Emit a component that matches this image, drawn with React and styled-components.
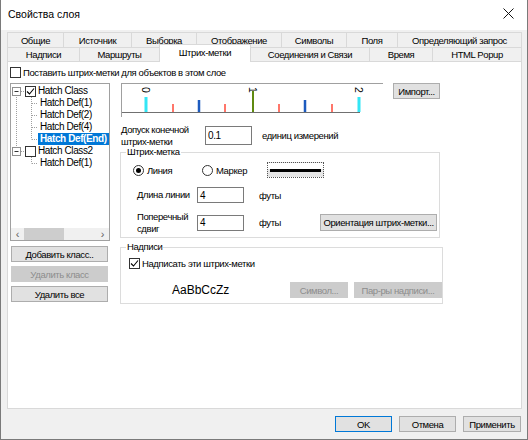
import styled, { createGlobalStyle } from "styled-components";

const GlobalStyle = createGlobalStyle`
  html, body {
    margin: 0;
    padding: 0;
    background: #ffffff;
  }
  body {
    font-family: "Liberation Sans", Arial, sans-serif;
    font-size: 9.5px;
    letter-spacing: -0.4px;
    color: #000000;
  }
`;

const Window = styled.div`
  width: 528px;
  height: 440px;
  box-sizing: border-box;
  border: 1px solid #7a7a7a;
  border-top: none;
  background: #f0f0f0;
  display: flex;
  flex-direction: column;
`;

const TitleBar = styled.div`
  height: 30px;
  background: #ffffff;
  display: flex;
  align-items: center;
  justify-content: space-between;
  padding: 0 13px 3px 7px;
  box-sizing: border-box;
  font-size: 10.5px;
  letter-spacing: 0;
`;

const Body = styled.div`
  flex: 1;
  display: flex;
  flex-direction: column;
  padding: 2px 0 0 6px;
`;

const Tabs = styled.div`
  width: 515px;
  display: flex;
  flex-direction: column;
`;

const TabRow = styled.div`
  display: flex;
  height: ${(p) => p.$h}px;
  align-items: flex-end;
  margin-top: ${(p) => (p.$front ? -1 : 0)}px;
`;

const Tab = styled.div`
  box-sizing: border-box;
  width: ${(p) => p.$w}px;
  height: ${(p) => (p.$active ? p.$h + 3 : p.$h)}px;
  margin-left: -1px;
  border: 1px solid #d9d9d9;
  border-bottom: ${(p) => (p.$active ? "none" : "1px solid #d9d9d9")};
  background: ${(p) => (p.$active ? "#ffffff" : "#f0f0f0")};
  display: flex;
  align-items: center;
  justify-content: center;
  padding-bottom: ${(p) => (p.$active ? 3 : 0)}px;
  white-space: nowrap;
  position: relative;
  z-index: ${(p) => (p.$active ? 2 : 1)};
  &:first-child {
    margin-left: 0;
  }
`;

const Panel = styled.div`
  box-sizing: border-box;
  width: 515px;
  height: 348px;
  margin-top: -1px;
  background: #ffffff;
  border: 1px solid #d9d9d9;
  padding: 5px 0 0 2px;
  display: flex;
  flex-direction: column;
`;

const CheckLine = styled.label`
  display: flex;
  align-items: center;
  gap: 2px;
  height: 11px;
  white-space: nowrap;
`;

const Box = styled.span`
  box-sizing: border-box;
  width: 11px;
  height: 11px;
  border: 1px solid #333333;
  background: #ffffff;
  display: inline-flex;
  align-items: center;
  justify-content: center;
  flex: none;
`;

const Columns = styled.div`
  display: flex;
  gap: 10px;
  margin-top: 5px;
`;

const LeftCol = styled.div`
  width: 100px;
  display: flex;
  flex-direction: column;
`;

const Tree = styled.div`
  box-sizing: border-box;
  height: 158px;
  border: 1px solid #a0a0a0;
  background: #ffffff;
  display: flex;
  flex-direction: column;
`;

const TreeItems = styled.div`
  flex: 1;
  padding-top: 1px;
`;

const TreeRow = styled.div`
  display: flex;
  align-items: center;
  height: 12px;
`;

const TreeLabel = styled.span`
  padding: 0 2px;
  height: 12px;
  line-height: 12px;
  white-space: nowrap;
  margin-left: ${(p) => p.$ml || 0}px;
  background: ${(p) => (p.$selected ? "#0078d7" : "transparent")};
  color: ${(p) => (p.$selected ? "#ffffff" : "#000000")};
  font-weight: ${(p) => (p.$selected ? "bold" : "normal")};
  font-size: 10px;
`;

const ScrollBar = styled.div`
  height: 12px;
  background: #f0f0f0;
  display: flex;
  align-items: center;
  font-size: 11px;
  color: #606060;
`;

const ScrollArrow = styled.span`
  width: 13px;
  line-height: 11px;
  text-align: center;
`;

const ScrollThumb = styled.span`
  width: 40px;
  height: 12px;
  background: #cdcdcd;
`;

const ScrollTrack = styled.span`
  flex: 1;
`;

const LeftButtons = styled.div`
  display: flex;
  flex-direction: column;
  gap: 4px;
  margin-top: 5px;
  padding-left: 1px;
`;

const Button = styled.div`
  box-sizing: border-box;
  width: ${(p) => p.$w}px;
  height: ${(p) => p.$h || 16}px;
  border: 1px solid ${(p) => (p.$default ? "#0078d7" : p.$disabled ? "#cccccc" : "#adadad")};
  background: ${(p) => (p.$disabled ? "#cccccc" : "#e1e1e1")};
  color: ${(p) => (p.$disabled ? "#8c8c8c" : "#000000")};
  display: flex;
  align-items: center;
  justify-content: center;
  white-space: nowrap;
  flex: none;
`;

const RightCol = styled.div`
  width: 323px;
  display: flex;
  flex-direction: column;
`;

const PreviewRow = styled.div`
  display: flex;
  align-items: flex-start;
  gap: 10px;
  padding-left: 1px;
`;

const PreviewFrame = styled.div`
  width: 261px;
  height: 33px;
  border-top: 1px solid #a0a0a0;
  border-left: 1px solid #a0a0a0;
`;

const FieldRow = styled.div`
  display: flex;
  align-items: center;
  height: ${(p) => p.$h}px;
  margin-top: ${(p) => p.$mt || 0}px;
  padding-left: ${(p) => p.$pl || 0}px;
`;

const FieldLabel = styled.span`
  width: ${(p) => p.$w}px;
  line-height: 12px;
  white-space: nowrap;
  flex: none;
`;

const Input = styled.div`
  box-sizing: border-box;
  width: ${(p) => p.$w}px;
  height: ${(p) => p.$h}px;
  border: 1px solid #7a7a7a;
  background: #ffffff;
  display: flex;
  align-items: center;
  padding-left: 2px;
  font-size: 10px;
  flex: none;
`;

const Unit = styled.span`
  margin-left: ${(p) => p.$ml}px;
  margin-right: ${(p) => p.$mr || 0}px;
  white-space: nowrap;
`;

const Group = styled.fieldset`
  box-sizing: border-box;
  width: ${(p) => p.$w}px;
  height: ${(p) => p.$h}px;
  margin: ${(p) => p.$mt}px 0 0 0;
  padding: 0;
  border: 1px solid #dcdcdc;
  display: flex;
  flex-direction: column;
`;

const Legend = styled.legend`
  margin-left: 5px;
  padding: 0 1px;
  height: 10px;
  line-height: 10px;
`;

const RadioRow = styled.div`
  display: flex;
  align-items: center;
  padding-left: 12px;
  margin-top: 5px;
`;

const RadioItem = styled.span`
  display: flex;
  align-items: center;
  gap: 3px;
  width: ${(p) => p.$w}px;
`;

const Radio = styled.span`
  box-sizing: border-box;
  width: 11px;
  height: 11px;
  border-radius: 50%;
  border: 1px solid #333333;
  background: #ffffff;
  display: inline-flex;
  align-items: center;
  justify-content: center;
  &::after {
    content: "";
    width: 5px;
    height: 5px;
    border-radius: 50%;
    background: ${(p) => (p.$on ? "#000000" : "transparent")};
  }
`;

const LineStyle = styled.span`
  box-sizing: border-box;
  width: 57px;
  height: 16px;
  border: 1px dotted #555555;
  background: linear-gradient(#ffffff 0 40%, #e6e6e6 40% 100%);
  display: flex;
  align-items: center;
  padding: 0 2px;
  &::after {
    content: "";
    flex: 1;
    height: 3px;
    background: #000000;
  }
`;

const LabelsBody = styled.div`
  display: flex;
  flex-direction: column;
  padding-left: 8px;
  margin-top: 6px;
`;

const SampleRow = styled.div`
  display: flex;
  align-items: center;
  margin-top: 13px;
  gap: 6px;
`;

const Sample = styled.span`
  width: 155px;
  padding-left: 43px;
  box-sizing: border-box;
  font-size: 12px;
  letter-spacing: 0;
`;

const Footer = styled.div`
  display: flex;
  justify-content: flex-end;
  gap: 7px;
  padding: 7px 6px 0 0;
`;

const CheckMark = () => (
  <svg width="9" height="9" viewBox="0 0 9 9">
    <path d="M1 4.5 L3.5 7 L8 1.5" fill="none" stroke="#000" strokeWidth="1.1" />
  </svg>
);

const Dotted = "1 1";

const TreeGuide = ({ kind }) => (
  <svg width="14" height="12" style={{ flex: "none" }}>
    {(kind === "exp" || kind === "expUp") && (
      <>
        {kind === "exp" ? (
          <line x1="5.5" y1="10" x2="5.5" y2="12" stroke="#a0a0a0" strokeDasharray={Dotted} />
        ) : (
          <line x1="5.5" y1="0" x2="5.5" y2="2" stroke="#a0a0a0" strokeDasharray={Dotted} />
        )}
        <rect x="1.5" y="2.5" width="8" height="8" fill="#fff" stroke="#909090" />
        <line x1="3.5" y1="6.5" x2="7.5" y2="6.5" stroke="#333" />
        <line x1="10" y1="6.5" x2="14" y2="6.5" stroke="#a0a0a0" strokeDasharray={Dotted} />
      </>
    )}
    {kind === "vert" && <line x1="5.5" y1="0" x2="5.5" y2="12" stroke="#a0a0a0" strokeDasharray={Dotted} />}
    {(kind === "tee" || kind === "elbow") && (
      <>
        <line x1="6.5" y1="0" x2="6.5" y2={kind === "tee" ? 12 : 6.5} stroke="#a0a0a0" strokeDasharray={Dotted} />
        <line x1="7" y1="6.5" x2="13" y2="6.5" stroke="#a0a0a0" strokeDasharray={Dotted} />
      </>
    )}
  </svg>
);

const HatchPreview = () => {
  const ticks = [
    { x: 24, h: 15, w: 3, c: "#33e6f5" },
    { x: 51, h: 8, w: 1.5, c: "#ff4a3a" },
    { x: 77, h: 12, w: 2.5, c: "#1d5bbf" },
    { x: 103, h: 8, w: 1.5, c: "#ff4a3a" },
    { x: 131, h: 21, w: 2, c: "#5f8a10" },
    { x: 157, h: 8, w: 1.5, c: "#ff4a3a" },
    { x: 183, h: 12, w: 2.5, c: "#1d5bbf" },
    { x: 210, h: 8, w: 1.5, c: "#ff4a3a" },
    { x: 237, h: 15, w: 3, c: "#33e6f5" },
  ];
  const labels = [
    { x: 24, t: "0" },
    { x: 131, t: "1" },
    { x: 237, t: "2" },
  ];
  return (
    <svg width="261" height="33">
      <line x1="0" y1="28.5" x2="238" y2="28.5" stroke="#707070" />
      {ticks.map((k, i) => (
        <rect key={i} x={k.x - k.w / 2} y={28 - k.h} width={k.w} height={k.h} fill={k.c} />
      ))}
      {labels.map((l) => (
        <text
          key={l.t}
          x="0"
          y="0"
          fontSize="10.5"
          fontFamily="Liberation Sans, Arial, sans-serif"
          transform={`translate(${l.x - 4} 3) rotate(90)`}
        >
          {l.t}
        </text>
      ))}
    </svg>
  );
};

const backTabs = [
  ["Общие", 57],
  ["Источник", 69],
  ["Выборка", 66],
  ["Отображение", 86],
  ["Символы", 66],
  ["Поля", 52],
  ["Определяющий запрос", 125],
];

const frontTabs = [
  ["Надписи", 73],
  ["Маршруты", 81],
  ["Штрих-метки", 92],
  ["Соединения и Связи", 120],
  ["Время", 64],
  ["HTML Popup", 90],
];

const treeRows = [
  { guides: ["exp"], box: true, checked: true, text: "Hatch Class" },
  { guides: ["vert", "tee"], text: "Hatch Def(1)" },
  { guides: ["vert", "tee"], text: "Hatch Def(2)" },
  { guides: ["vert", "tee"], text: "Hatch Def(4)" },
  { guides: ["vert", "elbow"], text: "Hatch Def(End)", selected: true },
  { guides: ["expUp"], box: true, checked: false, text: "Hatch Class2" },
  { guides: ["none", "elbow"], text: "Hatch Def(1)" },
];

const App = () => {
  return (
    <>
      <GlobalStyle />
      <Window>
        <TitleBar>
          <span>Свойства слоя</span>
          <svg width="11" height="11" viewBox="0 0 11 11">
            <path d="M0.5 0.5 L10.5 10.5 M10.5 0.5 L0.5 10.5" stroke="#111" strokeWidth="1" />
          </svg>
        </TitleBar>
        <Body>
          <Tabs>
            <TabRow $h={16}>
              {backTabs.map(([t, w]) => (
                <Tab key={t} $w={w} $h={16}>
                  {t}
                </Tab>
              ))}
            </TabRow>
            <TabRow $h={15} $front>
              {frontTabs.map(([t, w]) => (
                <Tab key={t} $w={w} $h={15} $active={t === "Штрих-метки"}>
                  {t}
                </Tab>
              ))}
            </TabRow>
          </Tabs>
          <Panel>
            <CheckLine>
              <Box />
              <span>Поставить штрих-метки для объектов в этом слое</span>
            </CheckLine>
            <Columns>
              <LeftCol>
                <Tree>
                  <TreeItems>
                    {treeRows.map((r, i) => (
                      <TreeRow key={i}>
                        {r.guides.map((g, j) => (
                          <TreeGuide key={j} kind={g} />
                        ))}
                        {r.box && <Box>{r.checked && <CheckMark />}</Box>}
                        <TreeLabel $selected={r.selected} $ml={r.box ? 0 : -1}>
                          {r.text}
                        </TreeLabel>
                      </TreeRow>
                    ))}
                  </TreeItems>
                  <ScrollBar>
                    <ScrollArrow>&lsaquo;</ScrollArrow>
                    <ScrollThumb />
                    <ScrollTrack />
                    <ScrollArrow>&rsaquo;</ScrollArrow>
                  </ScrollBar>
                </Tree>
                <LeftButtons>
                  <Button $w={97}>Добавить класс..</Button>
                  <Button $w={97} $disabled>
                    Удалить класс
                  </Button>
                  <Button $w={97}>Удалить все</Button>
                </LeftButtons>
              </LeftCol>
              <RightCol>
                <PreviewRow>
                  <PreviewFrame>
                    <HatchPreview />
                  </PreviewFrame>
                  <Button $w={47}>Импорт...</Button>
                </PreviewRow>
                <FieldRow $h={19} $mt={9} $pl={1}>
                  <FieldLabel $w={84}>
                    Допуск конечной
                    <br />
                    штрих-метки
                  </FieldLabel>
                  <Input $w={47} $h={19}>0.1</Input>
                  <Unit $ml={10}>единиц измерений</Unit>
                </FieldRow>
                <Group $w={320} $h={91} $mt={2}>
                  <Legend>Штрих-метка</Legend>
                  <RadioRow>
                    <RadioItem $w={69}>
                      <Radio $on />
                      Линия
                    </RadioItem>
                    <RadioItem $w={65}>
                      <Radio />
                      Маркер
                    </RadioItem>
                    <LineStyle />
                  </RadioRow>
                  <FieldRow $h={16} $mt={9} $pl={16}>
                    <FieldLabel $w={60}>Длина линии</FieldLabel>
                    <Input $w={47} $h={16}>4</Input>
                    <Unit $ml={15}>футы</Unit>
                  </FieldRow>
                  <FieldRow $h={17} $mt={11} $pl={16}>
                    <FieldLabel $w={60}>
                      Поперечный
                      <br />
                      сдвиг
                    </FieldLabel>
                    <Input $w={47} $h={16}>4</Input>
                    <Unit $ml={15} $mr={39}>футы</Unit>
                    <Button $w={117} $h={17}>Ориентация штрих-метки...</Button>
                  </FieldRow>
                </Group>
                <Group $w={322} $h={62} $mt={4}>
                  <Legend>Надписи</Legend>
                  <LabelsBody>
                    <CheckLine>
                      <Box>
                        <CheckMark />
                      </Box>
                      <span>Надписать эти штрих-метки</span>
                    </CheckLine>
                    <SampleRow>
                      <Sample>AaBbCcZz</Sample>
                      <Button $w={58} $disabled>
                        Символ...
                      </Button>
                      <Button $w={88} $disabled>
                        Пар-ры надписи...
                      </Button>
                    </SampleRow>
                  </LabelsBody>
                </Group>
              </RightCol>
            </Columns>
          </Panel>
          <Footer>
            <Button $w={57} $default>
              OK
            </Button>
            <Button $w={57}>Отмена</Button>
            <Button $w={58}>Применить</Button>
          </Footer>
        </Body>
      </Window>
    </>
  );
};

export default App;
